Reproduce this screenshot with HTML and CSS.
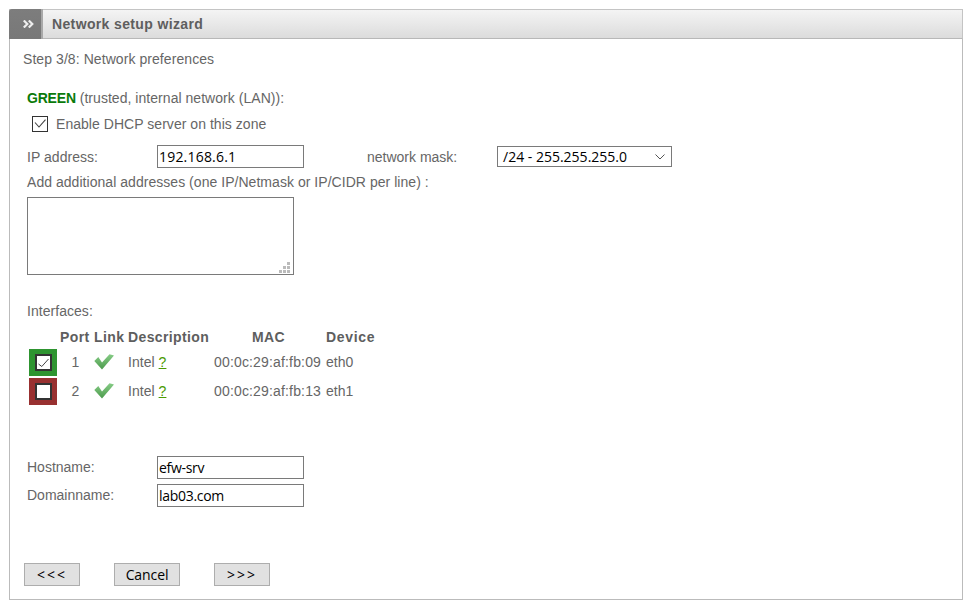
FILE: index.html
```html
<!DOCTYPE html>
<html lang="en">
<head>
<meta charset="utf-8">
<title>Network setup wizard</title>
<link rel="stylesheet" href="styles.css">
</head>
<body>
<section class="panel">
  <header class="head">
    <div class="head-tab"><svg width="11" height="8" viewBox="0 0 11 8"><path d="M0.800 0.500 4.300 4 0.800 7.500M5.800 0.500 9.300 4 5.800 7.500" fill="none" stroke="#eee" stroke-width="2.200"/></svg></div>
    <h1 class="head-title">Network setup wizard</h1>
  </header>
  <div class="body">
    <p class="step">Step 3/8: Network preferences</p>
    <div class="zone">
      <p class="zone-title"><b class="green">GREEN</b> (trusted, internal network (LAN)):</p>
      <label class="dhcp"><span class="cb"><svg width="14" height="14" viewBox="0 0 14 14"><path d="M2 5.500 6 10 12.500 2.700" fill="none" stroke="#444" stroke-width="1.100"/></svg></span>Enable DHCP server on this zone</label>
      <div class="ip-row">
        <span class="ip-label">IP address:</span>
        <span class="field field-num">192.168.6.1</span>
        <span class="mask-label">network mask:</span>
        <span class="select">/24 - 255.255.255.0<svg width="10" height="6" viewBox="0 0 10 6"><path d="M0.500 0.500 5 5 9.500 0.500" fill="none" stroke="#555" stroke-width="1"/></svg></span>
      </div>
      <p class="extra">Add additional addresses (one IP/Netmask or IP/CIDR per line) :</p>
      <div class="area"><svg class="grip" width="11" height="11" viewBox="0 0 11 11" fill="#bbb"><rect x="8" y="0" width="3" height="3"/><rect x="4" y="4" width="3" height="3"/><rect x="8" y="4" width="3" height="3"/><rect x="0" y="8" width="3" height="3"/><rect x="4" y="8" width="3" height="3"/><rect x="8" y="8" width="3" height="3"/></svg></div>
      <p class="if-title">Interfaces:</p>
      <div class="if-table">
        <span></span><b>Port</b><b>Link</b><b>Description</b><b class="c">MAC</b><b class="dev">Device</b>
        <span class="swatch sw-green"><span class="cb cb-in"><svg width="13" height="13" viewBox="0 0 13 13"><path d="M1.500 8 4.800 10.500 11.500 3" fill="none" stroke="#444" stroke-width="1"/></svg></span></span>
        <span class="c cell">1</span>
        <span class="cell"><svg class="tick" width="20" height="16" viewBox="0 0 20 16"><defs><linearGradient id="tickfill" x1="0" y1="0" x2="0" y2="1"><stop offset="0" stop-color="#86cc86"/><stop offset="1" stop-color="#4c9a4c"/></linearGradient></defs><path d="M0.300 7 4.300 3 8 8.500 15.500 0.300 20 1.500 8 15.500Z" fill="url(#tickfill)"/></svg></span>
        <span class="cell">Intel <a class="q">?</a></span><span class="cell mac">00:0c:29:af:fb:09</span><span class="cell">eth0</span>
        <span class="swatch sw-red"><span class="cb cb-in"></span></span>
        <span class="c cell">2</span>
        <span class="cell"><svg class="tick" width="20" height="16" viewBox="0 0 20 16"><path d="M0.300 7 4.300 3 8 8.500 15.500 0.300 20 1.500 8 15.500Z" fill="url(#tickfill)"/></svg></span>
        <span class="cell">Intel <a class="q">?</a></span><span class="cell mac">00:0c:29:af:fb:13</span><span class="cell">eth1</span>
      </div>
      <div class="host-row"><span class="host-label">Hostname:</span><span class="field field-host">efw-srv</span></div>
      <div class="host-row host-row-2"><span class="host-label">Domainname:</span><span class="field field-host">lab03.com</span></div>
    </div>
    <div class="buttons">
      <button class="btn btn-nav" type="button">&lt;&lt;&lt;</button>
      <button class="btn btn-cancel" type="button">Cancel</button>
      <button class="btn btn-nav" type="button">&gt;&gt;&gt;</button>
    </div>
  </div>
</section>
</body>
</html>
```
FILE: styles.css
```css
* { box-sizing: border-box; }
html, body { margin: 0; padding: 0; background: #fff; }
body { padding: 9px 7px 8px 9px; font: 14px "Liberation Sans", Arial, sans-serif; color: #666; height: 608px; overflow: hidden; letter-spacing: 0.04px; }
p { margin: 0; }
.panel { border: 1px solid #bbb; height: 591px; display: flex; flex-direction: column; }
.head { height: 30px; margin: -1px -1px 0; display: flex; align-items: stretch; background: linear-gradient(#f4f4f4, #dcdcdc); border: 1px solid #c4c4c4; border-bottom-color: #b8b8b8; }
.head-tab { width: 34px; margin: -1px 0 -1px -1px; background: linear-gradient(#7d7d7d, #787878); display: flex; align-items: center; justify-content: center; padding: 0 0 1px 6px; border-right: 2px solid #a8a8a8; border-radius: 3px 0 0 0; }
.head-title { margin: 0; padding-left: 9px; font-size: 14px; font-weight: bold; line-height: 28px; color: #5e5e5e; letter-spacing: 0.36px; }
.body { flex: 1; display: flex; flex-direction: column; padding: 12px 0 0 13px; line-height: 16px; }
.step { letter-spacing: 0.07px; }
.zone { padding-left: 4px; margin-top: 23px; }
.green { color: #0a7a0a; letter-spacing: -0.2px; }
.dhcp { display: flex; align-items: center; gap: 8px; margin: 10px 0 0 5px; height: 16px; }
.cb { width: 16px; height: 16px; border: 1px solid #333; background: #fff; display: inline-flex; align-items: center; justify-content: center; }
.ip-row { display: flex; align-items: center; margin-top: 13px; height: 23px; }
.ip-label { width: 130px; }
.mask-label { margin-left: 63px; width: 130px; letter-spacing: 0; }
.field { width: 147px; height: 23px; border: 1px solid #7a7a7a; padding-left: 1px; font: 14px/21px "Open Sans", sans-serif; color: #000; background: #fff; display: block; }
.field-num { letter-spacing: 0.2px; }
.field-host { letter-spacing: -0.3px; }
.select { width: 175px; height: 21px; border: 1px solid #7a7a7a; padding: 0 6px 0 5px; font: 14px/19px "Open Sans", sans-serif; letter-spacing: 0; color: #000; display: flex; justify-content: space-between; align-items: center; }
.extra { margin-top: 6px; }
.area { position: relative; width: 267px; height: 78px; margin-top: 7px; border: 1px solid #7a7a7a; }
.grip { position: absolute; right: 3px; bottom: 1px; }
.if-title { margin-top: 28px; }
.if-table { display: grid; grid-template-columns: 28px 31px 31px 83px 109px auto; grid-template-rows: 20px 27px 27px; gap: 2px 3px; margin: 8px 0 0 2px; align-items: center; width: max-content; }
.if-table b { color: #5e5e5e; letter-spacing: 0.38px; }
.if-table .dev { letter-spacing: 0.7px; }
.cell { padding-bottom: 2px; }
.mac { letter-spacing: 0.16px; }
.c { text-align: center; }
.tick { display: block; }
.swatch { width: 28px; height: 27px; display: flex; align-items: center; justify-content: center; }
.sw-green { background: #2e9430; }
.sw-red { background: #983030; }
.cb-in { width: 17px; height: 17px; border-width: 2px; }
.q { color: #4a9a00; text-decoration: underline; }
.host-row { display: flex; align-items: center; height: 23px; margin-top: 51px; }
.host-row-2 { margin-top: 5px; }
.host-label { width: 130px; padding-bottom: 2px; letter-spacing: 0; }
.buttons { display: flex; margin-top: 56px; padding-left: 1px; }
.btn { height: 23px; border: 1px solid #adadad; background: #e1e1e1; color: #000; font: 14px "Open Sans", sans-serif; padding: 0; }
.btn-nav { width: 56px; letter-spacing: 2px; }
.btn-cancel { width: 66px; margin: 0 34px; letter-spacing: -0.1px; }
```
